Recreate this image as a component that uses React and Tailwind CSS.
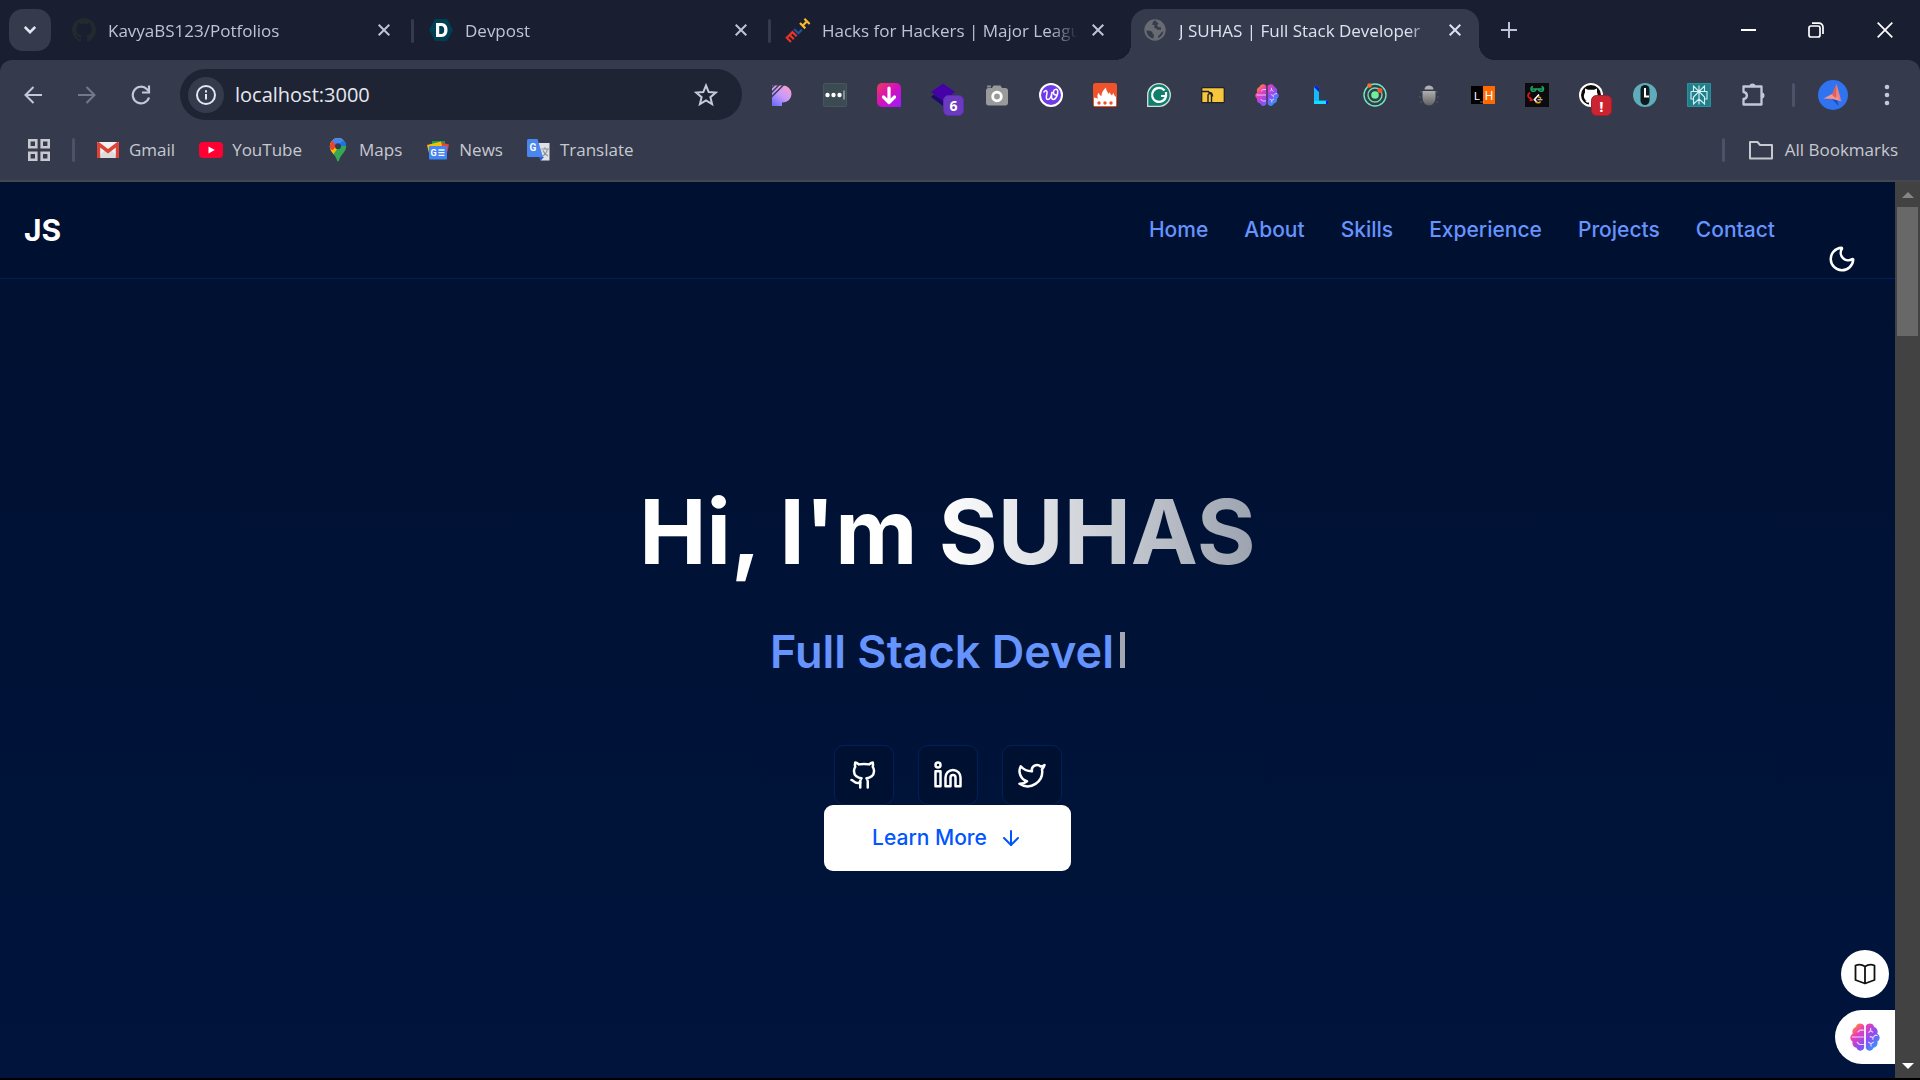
import React from "react";
import { Github, Linkedin, Twitter, ArrowDown, Moon } from "lucide-react";

/* ---------- favicons ---------- */

const GITHUB_MARK =
  "M8 0C3.58 0 0 3.58 0 8c0 3.54 2.29 6.53 5.47 7.59.4.07.55-.17.55-.38 0-.19-.01-.82-.01-1.49-2.01.37-2.53-.49-2.69-.94-.09-.23-.48-.94-.82-1.13-.28-.15-.68-.52-.01-.53.63-.01 1.08.58 1.23.82.72 1.21 1.87.87 2.33.66.07-.52.28-.87.51-1.07-1.78-.2-3.64-.89-3.64-3.95 0-.87.31-1.59.82-2.15-.08-.2-.36-1.02.08-2.12 0 0 .67-.21 2.2.82.64-.18 1.32-.27 2-.27s1.36.09 2 .27c1.53-1.04 2.2-.82 2.2-.82.44 1.1.16 1.92.08 2.12.51.56.82 1.27.82 2.15 0 3.07-1.87 3.75-3.65 3.95.29.25.54.73.54 1.48 0 1.07-.01 1.93-.01 2.2 0 .21.15.46.55.38A8.01 8.01 0 0 0 16 8c0-4.42-3.58-8-8-8z";

function GithubFavicon() {
  return (
    <svg className="size-6 shrink-0" viewBox="0 0 16 16" aria-hidden="true">
      <path d={GITHUB_MARK} fill="#24292e" />
    </svg>
  );
}

function DevpostFavicon() {
  return (
    <svg className="size-6 shrink-0" viewBox="0 0 24 24" aria-hidden="true">
      <path d="M6 1h12l6 11-6 11H6L0 12z" fill="#003e54" />
      <path d="M7 5h5.500c4 0 6 3 6 7s-2 7-6 7H7zM10.200 8v8h2c2 0 3-1.500 3-4s-1-4-3-4z" fill="#fff" fillRule="evenodd" />
    </svg>
  );
}

function MlhFavicon() {
  return (
    <svg className="size-6 shrink-0 overflow-visible" viewBox="0 0 24 24" fill="none" aria-hidden="true">
      <g transform="rotate(-45 12 12)" strokeWidth="2.200">
        <path d="M-1.400 15.500V9.600H6.600V15.500M2.600 9.600V15.500" stroke="#e73427" />
        <path d="M10 8.500v6h5" stroke="#1d539f" />
        <path d="M18.300 8.500v7.500M24.500 8.500v7.500M18.300 12.200h6.200" stroke="#f8b92a" />
      </g>
    </svg>
  );
}

function GlobeFavicon() {
  return (
    <svg className="size-6 shrink-0" viewBox="0 0 24 24" fill="none" aria-hidden="true">
      <circle cx="12" cy="12" r="10.700" fill="#686c72" />
      <path d="M13 3.500c-2 .5-2.500 2-2.500 3.500M14.500 4.500c-1 1.500-2 2.500-2 4.500 1 0 2 0 2.500 1.500h3" stroke="#353b4d" strokeWidth="2.400" />
      <path d="M3.500 12.500c2 0 4.500 0 6 1.500 0 1.500-.5 2 1.500 2.500l-.5 4C6.500 20 3.500 16.500 3.500 12.500z" fill="#353b4d" />
      <path d="M20.500 13c-.5 3.500-2.500 6-5.500 7-.5-1.500.5-2.500 2-3.500.5-1.500 2-2.500 3.500-3.500z" fill="#353b4d" />
    </svg>
  );
}

/* ---------- bookmark icons ---------- */

function GmailIcon() {
  return (
    <svg className="size-6" viewBox="0 0 24 24" aria-hidden="true">
      <path d="M1 4h22v16H1z" fill="#f2f2f2" />
      <path d="M1 20l8-8 3 2.500L15 12l8 8z" fill="#dcdcdc" />
      <path d="M1 5v15h3.200V9.500L12 15.500l7.800-6V20H23V5c0-.8-.9-1.300-1.800-1L12 11 2.800 4C1.900 3.700 1 4.200 1 5z" fill="#db4437" />
    </svg>
  );
}

function YoutubeIcon() {
  return (
    <svg className="size-6" viewBox="0 0 24 24" aria-hidden="true">
      <rect y="4" width="24" height="16" rx="4" fill="#f03" />
      <path d="M9.500 8.500v7l6.300-3.500z" fill="#fff" />
    </svg>
  );
}

function MapsIcon() {
  return (
    <svg className="size-6" viewBox="0 0 24 24" aria-hidden="true">
      <defs>
        <clipPath id="pin">
          <path d="M12 0a8.200 8.200 0 0 0-8.200 8.200c0 3 1.500 5 3.200 7.200 2 2.500 3.500 4.500 4 7 .3 1.300 1.700 1.300 2 0 .5-2.500 2-4.500 4-7 1.700-2.200 3.200-4.200 3.200-7.200A8.200 8.200 0 0 0 12 0z" />
        </clipPath>
      </defs>
      <g clipPath="url(#pin)">
        <path d="M0 0h24v24H0z" fill="#34a853" />
        <path d="M0 18L20 0H0z" fill="#fbbc04" />
        <path d="M0 18l8-8.500 7-4.500L7 17z" fill="#fbbc04" />
        <path d="M3 11V0h6l4 4-6 8z" fill="#ea4335" />
        <path d="M6 3l6 5 9-3-4-7H8z" fill="#4285f4" />
        <path d="M11 8l7-6 3 6z" fill="#1a73e8" />
      </g>
      <circle cx="12" cy="8.300" r="3" fill="#353b4d" />
    </svg>
  );
}

function NewsIcon() {
  return (
    <svg className="size-6" viewBox="0 0 24 24" aria-hidden="true">
      <path d="M6 3h13v8H6z" fill="#0f9d58" />
      <path d="M13 4l10 2.500-3 13z" fill="#ea4335" />
      <path d="M1 7l14-3.500L18 16 4 19z" fill="#fbbc04" />
      <rect x="3" y="8" width="18" height="13.500" rx="1" fill="#4285f4" />
      <text x="4.500" y="18" fontSize="9" fontWeight="700" fontFamily="Roboto, sans-serif" fill="#fff">G</text>
      <path d="M12.500 12h6M12.500 14.700h6M12.500 17.400h6" stroke="#fff" strokeWidth="1.300" />
    </svg>
  );
}

function TranslateIcon() {
  return (
    <svg className="size-6" viewBox="0 0 24 24" aria-hidden="true">
      <path d="M10 5h12.500v17.500H14z" fill="#dfe1e5" />
      <path d="M12 19h5l-3.500 4z" fill="#3a5bd0" />
      <path d="M14.500 11h7.500M18 9.200V11M20.500 11c-.7 3.500-3 6-5 7.200M16 12.500c1 2.500 3 4.500 5 5.500" stroke="#8c929b" strokeWidth="1.200" fill="none" />
      <path d="M1.500 1h9L16 19H1.500A1.500 1.500 0 0 1 0 17.500v-15A1.500 1.500 0 0 1 1.500 1z" fill="#4a86f0" />
      <text x="2.500" y="13" fontSize="10" fontWeight="700" fontFamily="Roboto, sans-serif" fill="#fff">G</text>
    </svg>
  );
}

function AppsIcon() {
  return (
    <svg className="size-6" viewBox="0 0 24 24" fill="none" stroke="#c7c9cf" strokeWidth="2.600" aria-hidden="true">
      <path d="M2.300 2.300h7v7h-7zM14.700 2.300h7v7h-7zM2.300 14.700h7v7h-7zM14.700 14.700h7v7h-7z" />
    </svg>
  );
}

/* ---------- extension icons ---------- */

function Brain({ className, id }) {
  const url = "url(#" + id + ")";
  return (
    <svg className={className} viewBox="0 0 24 24" fill="none" aria-hidden="true">
      <defs>
        <linearGradient id={id} x1="3" y1="2" x2="22" y2="22" gradientUnits="userSpaceOnUse">
          <stop offset="0" stopColor="#ff9a1f" />
          <stop offset=".25" stopColor="#f03cb4" />
          <stop offset=".6" stopColor="#8a4df5" />
          <stop offset="1" stopColor="#1fa8ff" />
        </linearGradient>
      </defs>
      <path d="M11.300 3.200C9.500.3 5.500.8 4.600 4 2 4.800 1.400 7.500 2.200 9.400-.4 11-.3 14.200 2 15.600c-.4 2.800 1 4.500 3.200 4.900 1 3.200 5 3.200 6.100.3z" fill={url} />
      <path d="M12.700 3.200c1.800-2.900 5.800-2.400 6.700.8 2.600.8 3.200 3.500 2.400 5.400 2.600 1.600 2.500 4.800.2 6.200.4 2.800-1 4.500-3.200 4.900-1 3.200-5 3.200-6.100.3z" fill={url} />
      <path d="M11 6.500H8L6 8.300M1.500 12H11M5.500 16l2 2H11M16.500 4.800V7l-1.800 1.500M16.500 7l2 1.300M22 10.700h-2l-1.700 1.800-2.500-1M18.300 12.500v1.700M14.500 16l2.300 1.300L19 16M16.800 17.300v2.300" stroke="#e9d5ff" strokeWidth=".9" />
    </svg>
  );
}

function Ext({ children }) {
  return (
    <svg className="size-6 overflow-visible" viewBox="0 0 24 24" fill="none" aria-hidden="true">
      {children}
    </svg>
  );
}

const EXTENSIONS = [
  ["Playlist helper", (
    <Ext>
      <defs>
        <linearGradient id="pp" x1="20" y1="2" x2="4" y2="22" gradientUnits="userSpaceOnUse">
          <stop stopColor="#ff9fc8" /><stop offset=".5" stopColor="#c79bfb" /><stop offset="1" stopColor="#6a6cff" />
        </linearGradient>
      </defs>
      <path d="M3 2.500h11a8.500 8.500 0 0 1 0 17h-1V23H3z" fill="url(#pp)" />
      <path d="M2 10L10 2M2 14.500L14.500 2M2 5.500L5.500 2" stroke="#353b4d" strokeWidth="1.400" />
    </Ext>
  )],
  ["Text expander", (
    <Ext>
      <rect x=".5" y=".5" width="23" height="23" rx="1" fill="#3c4a52" stroke="#46565e" />
      <circle cx="4.500" cy="12" r="2.200" fill="#fff" /><circle cx="10.500" cy="12" r="2.200" fill="#fff" /><circle cx="16.500" cy="12" r="2.200" fill="#fff" />
      <path d="M21 7.500v9" stroke="#cfd4d8" />
    </Ext>
  )],
  ["Downloader", (
    <Ext>
      <defs>
        <linearGradient id="dl" x1="0" y1="0" x2="24" y2="24" gradientUnits="userSpaceOnUse">
          <stop stopColor="#ee3a5b" /><stop offset=".5" stopColor="#d30fc0" /><stop offset="1" stopColor="#9a1cff" />
        </linearGradient>
      </defs>
      <path d="M5 0h14a5 5 0 0 1 5 5v19H5a5 5 0 0 1-5-5V5a5 5 0 0 1 5-5z" fill="url(#dl)" />
      <path d="M12 5v14.500M6.500 14l5.500 5.500 5.500-5.500" stroke="#fff" strokeWidth="3.200" strokeLinecap="round" strokeLinejoin="round" />
    </Ext>
  )],
  ["Layers", (
    <Ext>
      <path d="M0 14l3-2.500 9 6 9-6 3 2.500-12 9z" fill="#1e0a6e" />
      <path d="M12 .5l12 8.500-12 8.500L0 9z" fill="#4500a8" />
      <rect x="12.500" y="12.500" width="20" height="20" rx="5" fill="#6b3ac0" stroke="#5a2fae" />
      <text x="22.500" y="28" fontSize="14" fontWeight="700" fontFamily="Open Sans, sans-serif" textAnchor="middle" fill="#fff">6</text>
    </Ext>
  )],
  ["Screenshot", (
    <Ext>
      <path d="M1 7.500C1 6 2 5 3.500 5H7l1.500-2.500h7L17 5h3.500C22 5 23 6 23 7.500V20c0 1.500-1 2.500-2.500 2.500h-17C2 22.500 1 21.500 1 20z" fill="#9a9a9a" />
      <circle cx="12" cy="13.500" r="4.300" fill="#9a9a9a" stroke="#fff" strokeWidth="2.800" />
      <path d="M2 3.500h4" stroke="#8a8a8a" strokeWidth="2" />
    </Ext>
  )],
  ["Writing assistant", (
    <Ext>
      <circle cx="12" cy="12" r="11" fill="#6f3be8" stroke="#fff" strokeWidth="2" />
      <path d="M5 9c1.500-2 3.500-2 3 1-.5 3-1.500 6.500.8 6.500 2.200 0 3.700-4 4.200-7.500-.7 3.500-1 7.500 1.200 7.500 2.800 0 5-5.500 4.500-8.500-.5-2.500-3.700-2-4.200.5-.4 2 .5 3.500 2.500 3.500" stroke="#fff" strokeWidth="1.500" strokeLinecap="round" />
    </Ext>
  )],
  ["Hot picks", (
    <Ext>
      <rect width="24" height="24" rx="2.500" fill="#f0522a" />
      <path d="M1 23V14.500l4 1c-1-2-1-4 1-6 0 2 1 3 2.500 3.500 0-4 2-6 4.500-8.500 0 3 1.500 4 2.500 6.500l1.500-2c0 2 1 2.500 2 3.500l1.500-3c0 2 1 3 2.500 4.500V23z" fill="#fff" />
      <circle cx="6" cy="20" r="1.700" fill="#f0522a" /><circle cx="12" cy="20" r="1.700" fill="#f0522a" /><circle cx="18" cy="20" r="1.700" fill="#f0522a" />
    </Ext>
  )],
  ["Grammar checker", (
    <Ext>
      <path d="M12 .7a11.300 11.300 0 1 1 0 22.600H.7V12A11.300 11.300 0 0 1 12 .7z" fill="#0f7f6c" stroke="#d8dee0" strokeWidth="1.300" />
      <path d="M17.500 7.500A7 7 0 1 0 19 13h-5M19 9v4" stroke="#fff" strokeWidth="2.200" />
    </Ext>
  )],
  ["Folder tabs", (
    <Ext>
      <rect x=".7" y="4.700" width="22.600" height="15" rx="1" fill="#f6c63c" stroke="#20222a" strokeWidth="1.300" />
      <path d="M1 8.500h6.500l1 1.500M7 20v-7.500c0-2.500 3.500-2.500 3.500 0V20M8.500 9.500c2 0 3 1 3 4" stroke="#20222a" strokeWidth="1.400" />
    </Ext>
  )],
  ["Brain notes", <Brain key="b" className="size-6" id="brainSmall" />],
  ["Lite mode", (
    <Ext>
      <path d="M5 4l2-1.500L10 5v12.500h9V21H5z" fill="#18b8ff" />
      <path d="M5 4l2-1.500L10 5v4zM17 17.500h2V21h-2z" fill="#1118d8" />
      <path d="M5 18h12v3H5z" fill="#12e0ff" />
    </Ext>
  )],
  ["Orbit", (
    <Ext>
      <circle cx="12" cy="12" r="11" stroke="#6fe8c0" strokeWidth="1.400" />
      <circle cx="12" cy="12" r="7" stroke="#6fe0a0" strokeWidth="1.400" />
      <circle cx="12" cy="12" r="3.800" fill="#6cf09a" />
      <circle cx="6.500" cy="2.500" r="2.300" fill="#f5702c" /><circle cx="17" cy="7.500" r="2.500" fill="#f2542c" />
    </Ext>
  )],
  ["Bug reporter", (
    <Ext>
      <defs>
        <linearGradient id="bug" x1="0" y1="7" x2="0" y2="23" gradientUnits="userSpaceOnUse"><stop stopColor="#b4b4b4" /><stop offset="1" stopColor="#5e5e5e" /></linearGradient>
      </defs>
      <path d="M7.500 6.500C7.500 1 16.500 1 16.500 6.500z" fill="#b0b0b0" />
      <path d="M5.500 8h13v6c0 5-3 8.500-6.500 8.500S5.500 19 5.500 14z" fill="url(#bug)" />
      <path d="M3 9h2M19 9h2M2 14h2M20 14h2M3 19h2M19 19h2" stroke="#555a66" strokeWidth="1.200" />
    </Ext>
  )],
  ["LH", (
    <Ext>
      <path d="M0 3h12v18H0z" fill="#000" /><path d="M12 3h12v18H12z" fill="#ff6a00" />
      <text x="6" y="16.500" fontSize="11" fontFamily="Roboto, sans-serif" textAnchor="middle" fill="#fff">L</text>
      <text x="18" y="16.500" fontSize="12" fontFamily="Roboto, sans-serif" textAnchor="middle" fill="#fff">H</text>
      <path d="M9.500 19h4" stroke="#cfcfcf" strokeDasharray="1 1" />
    </Ext>
  )],
  ["Code practice sync", (
    <Ext>
      <path d="M0 0h24v24H0z" fill="#0b0b0d" />
      <path d="M12 6H7M12 6h6M11 6a2.500 2.500 0 1 1-3-2.600M13.500 6a2.500 2.500 0 1 0 3-2.600" stroke="#1fa463" strokeWidth="1.500" />
      <path d="M5 9.500c-3 2-2.500 5.500 1 6.500" stroke="#e01818" strokeWidth="1.700" /><path d="M4.500 18.500l4-1-3.500-4z" fill="#e01818" />
      <path d="M14 11.500l-4.500 5 2.500 3" stroke="#fff" strokeWidth="1.700" /><path d="M10.500 18.500c2 2 4 1.500 5 0M13 14c1.500-.3 2 .5 3 1.500" stroke="#f0a020" strokeWidth="1.500" /><path d="M12.500 16.700h5" stroke="#bbb" strokeWidth="1.300" />
    </Ext>
  )],
  ["Repository alerts", (
    <Ext>
      <circle cx="12" cy="12" r="12" fill="#fff" />
      <circle cx="12" cy="12" r="10" fill="#0a0a0a" />
      <path d="M6 5.500l3 1.300h6l3-1.300v4c2 4-.5 7-4 7.500v5h-4v-2.500c-2 .5-3-.5-4-2l3 .5c-3.500-.5-5.500-4.500-3-8.500z" fill="#fff" />
      <rect x="12.500" y="12.500" width="20" height="20" rx="5" fill="#cb2431" stroke="#a81c28" />
      <text x="22.500" y="28.500" fontSize="15" fontWeight="700" fontFamily="Open Sans, sans-serif" textAnchor="middle" fill="#fff">!</text>
    </Ext>
  )],
  ["Time tracker", (
    <Ext>
      <circle cx="12" cy="12" r="12" fill="#5fadba" />
      <rect x="7.500" y="2" width="9" height="20" rx="4.500" fill="#0e1a1d" />
      <path d="M12 5v8.500h4" stroke="#fff" strokeWidth="2" />
    </Ext>
  )],
  ["Answer engine", (
    <Ext>
      <path d="M.5.500h23v23H.5z" fill="#1f808d" stroke="#2f909c" />
      <path d="M12 2.500v19M12 8.500L6.500 3v5.500M12 8.500L17.500 3v5.500M4 8.500h16v7.500h-2.500M4 8.500V16h2.500M12 8.500L6.500 14v7l5.500-5M12 8.500l5.500 5.500v7L12 16" stroke="#d5f0f0" strokeWidth="1.100" />
    </Ext>
  )],
  ["Extensions", (
    <Ext>
      <path d="M2.500 3.500h18v18h-18v-5.500c4.500-.5 4.500-6.500 0-7z" stroke="#c3c7dc" strokeWidth="2.300" strokeLinejoin="round" />
      <path d="M8.500 3.500a3 3 0 0 1 6 0M20.500 9.500a3 3 0 0 1 0 6" fill="#c3c7dc" />
    </Ext>
  )],
];

/* ---------- browser chrome ---------- */

function Cross({ className }) {
  return (
    <svg className={className} viewBox="0 0 12 12" fill="none" stroke="currentColor" strokeWidth="2" aria-hidden="true">
      <path d="M.7.700l10.600 10.600M11.300.700L.7 11.300" />
    </svg>
  );
}

function Tab({ icon, title, active, divider }) {
  return (
    <>
      <div
        role="tab"
        aria-selected={!!active}
        className={
          active
            ? "relative flex h-full w-[348px] min-w-0 items-start rounded-t-2xl bg-[#353b4d] pl-3 pr-3 text-[#dfe2ee] before:absolute before:bottom-0 before:-left-4 before:size-4 before:bg-[radial-gradient(circle_at_0_0,transparent_16px,#353b4d_16px)] after:absolute after:bottom-0 after:-right-4 after:size-4 after:bg-[radial-gradient(circle_at_100%_0,transparent_16px,#353b4d_16px)]"
            : "flex h-full w-[348px] min-w-0 items-start pl-3 pr-3 text-[#bfc3d9]"
        }
      >
        <span className="flex h-[42px] shrink-0 items-center">{icon}</span>
        <span className="ml-3 mr-2 flex h-11 min-w-0 flex-1 items-center overflow-hidden whitespace-nowrap text-[17px] [mask-image:linear-gradient(to_right,black_calc(100%-28px),transparent)]">
          {title}
        </span>
        <button aria-label={"Close " + title} className="flex h-[42px] w-6 shrink-0 items-center justify-center">
          <Cross className="size-3" />
        </button>
      </div>
      <span className="flex h-[44px] w-[9px] shrink-0 items-center justify-center">
        {divider && <span className="h-6 w-[3px] rounded-full bg-[#353b4d]" />}
      </span>
    </>
  );
}

function TabStrip() {
  return (
    <div className="flex h-[60px] items-start bg-[#191f30] pl-[9px] pt-[9px]">
      <button aria-label="Search tabs" className="flex size-[42px] shrink-0 items-center justify-center rounded-[14px] bg-[#353b4d]">
        <svg className="h-2 w-3" viewBox="0 0 12 8" fill="none" stroke="#e3e5f0" strokeWidth="2.500" aria-hidden="true">
          <path d="M.8 1L6 6.200 11.200 1" />
        </svg>
      </button>
      <div role="tablist" className="ml-[9px] flex h-full min-w-0 items-start">
        <Tab icon={<GithubFavicon />} title="KavyaBS123/Potfolios" divider />
        <Tab icon={<DevpostFavicon />} title="Devpost" divider />
        <Tab icon={<MlhFavicon />} title="Hacks for Hackers | Major Leagu" />
        <Tab icon={<GlobeFavicon />} title="J SUHAS | Full Stack Developer" active />
      </div>
      <button aria-label="New tab" className="flex size-[42px] shrink-0 items-center justify-center text-[#bfc3d9]">
        <svg className="size-4" viewBox="0 0 16 16" stroke="currentColor" strokeWidth="2" aria-hidden="true">
          <path d="M8 0v16M0 8h16" />
        </svg>
      </button>
      <div className="ml-auto flex shrink-0 text-white">
        <button aria-label="Minimize" className="flex h-[42px] w-[68px] items-center justify-center">
          <span className="h-[2px] w-[15px] bg-white" />
        </button>
        <button aria-label="Restore" className="flex h-[42px] w-[68px] items-center justify-center">
          <svg className="size-4" viewBox="0 0 16 16" fill="none" stroke="currentColor" strokeWidth="1.700" aria-hidden="true">
            <rect x="1" y="4" width="11" height="11" rx="2" />
            <path d="M4 1.200h7a4 4 0 0 1 4 4V12" />
          </svg>
        </button>
        <button aria-label="Close window" className="flex h-[42px] w-[70px] items-center justify-center">
          <svg className="size-4" viewBox="0 0 16 16" fill="none" stroke="currentColor" strokeWidth="1.700" aria-hidden="true">
            <path d="M.7.700l14.600 14.600M15.300.700L.7 15.300" />
          </svg>
        </button>
      </div>
    </div>
  );
}

function ToolButton({ label, children }) {
  return (
    <button aria-label={label} className="flex h-[51px] w-[54px] shrink-0 items-center justify-center">
      {children}
    </button>
  );
}

function Toolbar() {
  return (
    <div className="bg-[#191f30]">
      <div className="flex h-[60px] items-center rounded-t-xl bg-[#353b4d] px-[6px] pt-[9px]">
        <ToolButton label="Back">
          <svg className="size-[18px]" viewBox="0 0 18 18" fill="none" stroke="#c3c7dc" strokeWidth="2" aria-hidden="true"><path d="M18 9H1.500M9.500 1L1.500 9l8 8" /></svg>
        </ToolButton>
        <ToolButton label="Forward">
          <svg className="size-[18px]" viewBox="0 0 18 18" fill="none" stroke="#747989" strokeWidth="2" aria-hidden="true"><path d="M0 9h16.500M8.500 1l8 8-8 8" /></svg>
        </ToolButton>
        <ToolButton label="Reload">
          <svg className="size-5" viewBox="0 0 20 20" fill="none" stroke="#c3c7dc" strokeWidth="2.200" aria-hidden="true"><path d="M18 12.500A8.300 8.300 0 1 1 16 4.200L18 6.300" /><path d="M18 .5v7h-7" /></svg>
        </ToolButton>
        <div className="mx-3 flex h-[51px] min-w-0 flex-1 items-center rounded-full bg-[#1e2433] pl-2 pr-5">
          <button aria-label="Site information" className="flex size-9 shrink-0 items-center justify-center rounded-full bg-[#353b4d]">
            <svg className="size-5" viewBox="0 0 20 20" fill="none" stroke="#e4e6ef" strokeWidth="2" aria-hidden="true">
              <circle cx="10" cy="10" r="9" /><path d="M10 9v5.500M10 5.200v2.200" />
            </svg>
          </button>
          <input aria-label="Address" defaultValue="localhost:3000" className="ml-[11px] min-w-0 flex-1 bg-transparent text-[20px] leading-7 text-[#e6e8f0] outline-none" />
          <button aria-label="Bookmark this tab" className="flex size-8 shrink-0 items-center justify-center">
            <svg className="size-6" viewBox="0 0 24 24" fill="none" stroke="#c7cad6" strokeWidth="2" aria-hidden="true">
              <path d="M12 2.500l2.700 6.600 7.100.5-5.400 4.600 1.700 7L12 17.400l-6.100 3.800 1.700-7-5.400-4.600 7.100-.5z" />
            </svg>
          </button>
        </div>
        {EXTENSIONS.map(([label, icon]) => (
          <ToolButton key={label} label={label}>{icon}</ToolButton>
        ))}
        <span className="flex w-[26px] shrink-0 justify-center"><span className="h-6 w-[3px] rounded-full bg-[#4c5368]" /></span>
        <ToolButton label="Profile">
          <svg className="size-[30px]" viewBox="0 0 30 30" aria-hidden="true">
            <circle cx="15" cy="15" r="15" fill="#2f73f0" />
            <path d="M13 18l6 .5 1.500 7.500z" fill="#1f4fb8" />
            <path d="M18.500 4l4.500 16-9-5z" fill="#f2837c" />
            <path d="M5.500 18.500L15 13.500l9 8-9.500-2.500z" fill="#f7938c" />
            <path d="M18.500 4l-4.500 10.500 4 4z" fill="#d9605f" />
          </svg>
        </ToolButton>
        <ToolButton label="Menu">
          <svg className="h-[22px] w-[6px]" viewBox="0 0 6 22" fill="#c3c7dc" aria-hidden="true"><circle cx="3" cy="3" r="2.300" /><circle cx="3" cy="11" r="2.300" /><circle cx="3" cy="19" r="2.300" /></svg>
        </ToolButton>
      </div>
    </div>
  );
}

const BOOKMARKS = [
  ["Gmail", <GmailIcon key="i" />],
  ["YouTube", <YoutubeIcon key="i" />],
  ["Maps", <MapsIcon key="i" />],
  ["News", <NewsIcon key="i" />],
  ["Translate", <TranslateIcon key="i" />],
];

function BookmarkBar() {
  return (
    <nav aria-label="Bookmarks" className="flex h-[62px] items-center border-b-2 border-[#44474f] bg-[#353b4d] pl-[27px] pr-[22px] text-[17px] text-[#c7c9d0]">
      <button aria-label="Apps"><AppsIcon /></button>
      <span className="mx-[21px] h-6 w-[3px] rounded-full bg-[#4c5368]" />
      <ul className="flex items-center gap-6">
        {BOOKMARKS.map(([name, icon]) => (
          <li key={name}>
            <a href={"#" + name.toLowerCase()} className="flex items-center gap-[9px]">{icon}{name}</a>
          </li>
        ))}
      </ul>
      <span className="ml-auto mr-6 h-6 w-[3px] rounded-full bg-[#4c5368]" />
      <button className="flex items-center gap-3">
        <svg className="size-6" viewBox="0 0 24 24" fill="none" stroke="#c7c9d0" strokeWidth="2" strokeLinejoin="round" aria-hidden="true"><path d="M1 4h7.500l2.500 3h12v13.500H1z" /></svg>
        All Bookmarks
      </button>
    </nav>
  );
}

/* ---------- portfolio page ---------- */

const LINKS = ["Home", "About", "Skills", "Experience", "Projects", "Contact"];

function SocialLink({ label, children }) {
  return (
    <a href={"#" + label.toLowerCase()} aria-label={label} className="flex size-[60px] items-center justify-center rounded-[10px] border border-[#00205c] bg-[#001030] text-white">
      {children}
    </a>
  );
}

function Portfolio() {
  return (
    <div className="relative flex min-w-0 flex-1 flex-col bg-linear-to-b from-[#001030] to-[#00143c] font-['Inter',sans-serif]">
      <header className="flex h-[97px] items-center justify-between border-b border-[#001f5c] bg-[#001030] pl-6 pr-[120px]">
        <a href="#top" className="text-[30px] font-bold leading-9 text-white">JS</a>
        <nav aria-label="Main">
          <ul className="flex gap-9 text-[21px] font-medium leading-7 text-[#6694ff]">
            {LINKS.map((l) => (
              <li key={l}><a href={"#" + l.toLowerCase()}>{l}</a></li>
            ))}
          </ul>
        </nav>
      </header>
      <button aria-label="Toggle theme" className="absolute right-[38px] top-[62px] text-white">
        <Moon size={30} strokeWidth={2} />
      </button>

      <main className="flex flex-1 flex-col items-center pt-[208px]">
        <h1 className="text-[90px] font-bold leading-[90px] text-white">
          Hi, I'm{" "}
          <span className="bg-linear-to-r from-white to-[#9ca3af] bg-clip-text text-transparent">SUHAS</span>
        </h1>
        <p className="mt-12 flex items-center text-[45px] font-semibold leading-[54px] text-[#6694ff]">
          Full Stack Devel
          <span className="mb-1 ml-[6px] h-9 w-[5px] bg-[#a1a7b3]" />
        </p>
        <div className="mt-[66px] flex gap-6">
          <SocialLink label="GitHub"><Github size={30} /></SocialLink>
          <SocialLink label="LinkedIn"><Linkedin size={30} /></SocialLink>
          <SocialLink label="Twitter"><Twitter size={30} /></SocialLink>
        </div>
        <button className="flex h-[66px] items-center gap-3 rounded-[9px] bg-white px-12 text-[21px] font-medium text-[#0055ff]">
          Learn More
          <ArrowDown size={24} />
        </button>
      </main>

      <div className="absolute bottom-[14px] right-0 flex flex-col items-end gap-3">
        <button aria-label="Reading mode" className="mr-[6px] flex size-12 items-center justify-center rounded-full bg-white">
          <svg className="size-6" viewBox="0 0 24 24" fill="none" stroke="#111" strokeWidth="1.800" strokeLinejoin="round" aria-hidden="true">
            <path d="M12 4.500C9 2.500 5 2.500 2.500 3.500v14.500l9.500 3.500 9.500-3.500V3.500C19 2.500 15 2.500 12 4.500zM12 4.500v17" />
          </svg>
        </button>
        <button aria-label="Brain notes panel" className="flex h-[54px] w-[60px] items-center justify-center rounded-l-full bg-white">
          <Brain className="size-[30px]" id="brainLarge" />
        </button>
      </div>
    </div>
  );
}

function Scrollbar() {
  return (
    <div aria-hidden="true" className="flex w-[25px] shrink-0 flex-col items-center bg-[#424242]">
      <span className="flex h-[25px] items-center">
        <svg className="h-[6px] w-3" viewBox="0 0 12 6" fill="#868686"><path d="M6 0l6 6H0z" /></svg>
      </span>
      <span className="h-[129px] w-[21px] bg-[#686868]" />
      <span className="mt-auto flex h-[25px] items-center">
        <svg className="h-[6px] w-3" viewBox="0 0 12 6" fill="#fff"><path d="M0 0h12L6 6z" /></svg>
      </span>
    </div>
  );
}

export default function App() {
  return (
    <div className="flex min-h-screen flex-col border-b-2 border-black font-['Open_Sans','Noto_Sans',sans-serif]">
      <TabStrip />
      <Toolbar />
      <BookmarkBar />
      <div className="flex flex-1">
        <Portfolio />
        <Scrollbar />
      </div>
    </div>
  );
}
